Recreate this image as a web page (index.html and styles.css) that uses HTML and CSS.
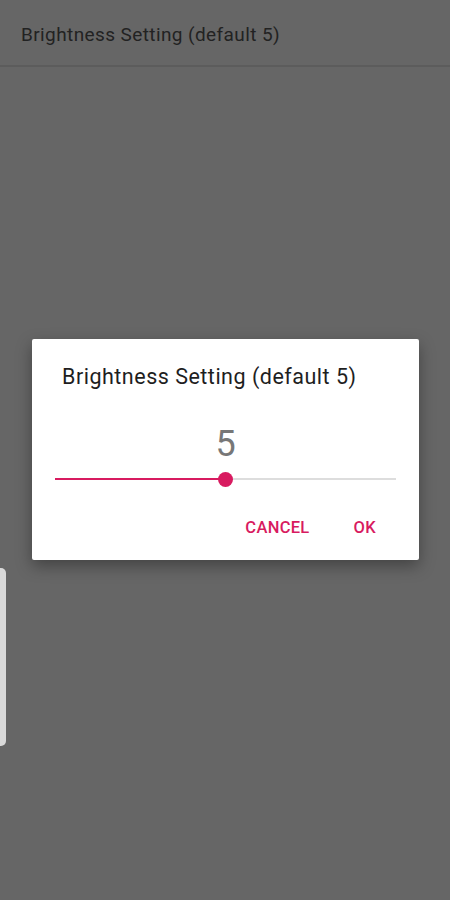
FILE: index.html
```html
<!DOCTYPE html>
<html>
<head>
<meta charset="utf-8">
<link rel="stylesheet" href="styles.css">
</head>
<body>
<div class="screen">
  <div class="appbar">Brightness Setting (default 5)</div>
  <div class="content">
    <div class="dialog">
      <div class="title">Brightness Setting (default 5)</div>
      <div class="value">5</div>
      <div class="slider">
        <div class="track-on"></div>
        <div class="thumb"></div>
        <div class="track-off"></div>
      </div>
      <div class="buttons">
        <span class="btn">CANCEL</span>
        <span class="btn">OK</span>
      </div>
    </div>
  </div>
  <div class="edge-tab"></div>
</div>
</body>
</html>
```
FILE: styles.css
```css
html, body {
  margin: 0;
  padding: 0;
}
body {
  width: 450px;
  height: 900px;
  background: #666666;
  font-family: Roboto, "Noto Sans", sans-serif;
  overflow: hidden;
}
.screen {
  position: relative;
  width: 450px;
  height: 900px;
  display: flex;
  flex-direction: column;
}
.appbar {
  height: 67px;
  box-sizing: border-box;
  border-bottom: 2px solid #5c5c5c;
  padding-left: 21px;
  display: flex;
  align-items: center;
  font-size: 19px;
  letter-spacing: 0.4px;
  color: #222222;
  padding-top: 3px;
}
.content {
  padding-top: 272px;
  display: flex;
  justify-content: center;
  padding-left: 1px;
}
.dialog {
  width: 387px;
  height: 221px;
  box-sizing: border-box;
  background: #ffffff;
  border-radius: 2px;
  box-shadow: 0 6px 16px rgba(0,0,0,0.35);
  padding: 25px 0 0 30px;
  display: flex;
  flex-direction: column;
}
.title {
  font-size: 21.5px;
  letter-spacing: 0.5px;
  color: #1e1e1e;
  line-height: 26px;
}
.value {
  font-size: 36px;
  color: #777777;
  text-align: center;
  margin-top: 34px;
  line-height: 40px;
  padding-right: 30px;
}
.slider {
  margin-top: 7px;
  margin-left: -7px;
  width: 341px;
  height: 16px;
  display: flex;
  align-items: center;
}
.track-on {
  width: 164px;
  height: 2px;
  background: #d81b60;
}
.thumb {
  width: 15px;
  height: 15px;
  border-radius: 50%;
  background: #d81b60;
  flex: none;
  margin-left: -1px;
}
.track-off {
  flex: 1;
  height: 2px;
  background: #dddddd;
}
.buttons {
  margin-top: 31px;
  display: flex;
  justify-content: flex-end;
  gap: 44px;
  padding-right: 43px;
}
.btn {
  font-size: 16.5px;
  font-weight: 500;
  color: #d81b60;
  letter-spacing: 0.3px;
  line-height: 20px;
}
.edge-tab {
  position: absolute;
  left: 0;
  top: 568px;
  width: 6px;
  height: 178px;
  background: #d9d9d9;
  border-radius: 0 5px 5px 0;
}
```
